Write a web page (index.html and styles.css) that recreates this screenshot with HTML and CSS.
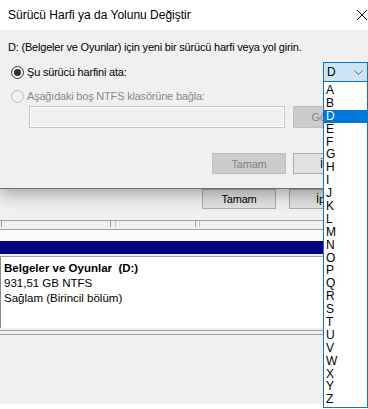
FILE: index.html
```html
<!DOCTYPE html>
<html lang="tr">
<head>
    <meta charset="UTF-8">
    <title>Sürücü Harfi ya da Yolunu Değiştir</title>
    <link rel="stylesheet" href="styles.css">
</head>
<body>
    <div class="screen">
        <div class="dialog">
            <div class="titlebar">
                <span class="title">Sürücü Harfi ya da Yolunu Değiştir</span>
                <svg class="close" width="10" height="10" viewBox="0 0 10 10"><path d="M0 0L10 10M10 0L0 10" stroke="#000" stroke-width="1"/></svg>
            </div>
            <div class="dialog-body">
                <p class="prompt">D: (Belgeler ve Oyunlar) için yeni bir sürücü harfi veya yol girin.</p>
                <div class="row row-letter">
                    <label class="radio"><span class="radio-dot checked"></span>Şu sürücü harfini ata:</label>
                    <div class="combo">
                        <span>D</span>
                        <svg class="chevron" width="9" height="5" viewBox="0 0 9 5"><path d="M0.5 0.5L4.5 4.5L8.5 0.5" fill="none" stroke="#606060"/></svg>
                    </div>
                </div>
                <div class="row row-folder">
                    <label class="radio disabled"><span class="radio-dot"></span>Aşağıdaki boş NTFS klasörüne bağla:</label>
                </div>
                <div class="row row-path">
                    <div class="path-input"></div>
                    <button class="btn" disabled>Gözat...</button>
                </div>
                <div class="row row-actions">
                    <button class="btn" disabled>Tamam</button>
                    <button class="btn">İptal</button>
                </div>
            </div>
        </div>

        <div class="backdrop">
            <div class="bg-buttons">
                <button class="btn">Tamam</button>
                <button class="btn">İptal</button>
            </div>
            <div class="gap"></div>
            <div class="cols">
                <span class="col c1"></span>
                <span class="col c2"></span>
                <span class="col c3"></span>
                <span class="col c4"></span>
                <span class="col c5"></span>
            </div>
            <div class="strip"></div>
            <div class="navy"></div>
            <div class="volume">
                <div class="vol-name">Belgeler ve Oyunlar  (D:)</div>
                <div>931,51 GB NTFS</div>
                <div>Sağlam (Birincil bölüm)</div>
            </div>
            <div class="rule"></div>
            <div class="pane"></div>
            <div class="legend">Ayrılmamış   Birincil bölüm</div>
        </div>

        <ul class="letter-list">
            <li>A</li>
            <li>B</li>
            <li class="selected">D</li>
            <li>E</li>
            <li>F</li>
            <li>G</li>
            <li>H</li>
            <li>I</li>
            <li>J</li>
            <li>K</li>
            <li>L</li>
            <li>M</li>
            <li>N</li>
            <li>O</li>
            <li>P</li>
            <li>Q</li>
            <li>R</li>
            <li>S</li>
            <li>T</li>
            <li>U</li>
            <li>V</li>
            <li>W</li>
            <li>X</li>
            <li>Y</li>
            <li>Z</li>
        </ul>
    </div>
</body>
</html>
```

FILE: styles.css
```css
body {
    margin: 0;
    background-color: #f0f0f0;
    font-family: 'Liberation Sans', Arial, sans-serif;
    font-size: 11px;
    letter-spacing: -0.2px;
    color: #000;
}
.screen {
    position: relative;
    width: 368px;
    height: 409px;
    overflow: hidden;
}
.dialog {
    position: relative;
    z-index: 1;
    box-sizing: border-box;
    height: 189px;
    background-color: #f0f0f0;
    border-bottom: 1px solid #707070;
    box-shadow: 0 5px 16px rgba(0, 0, 0, 0.32);
    overflow: hidden;
}
.titlebar {
    display: flex;
    align-items: center;
    height: 30px;
    padding-left: 8px;
    background-color: #fff;
}
.title {
    font-size: 12px;
    letter-spacing: 0;
}
.close {
    margin-left: auto;
    margin-right: 1px;
}
.dialog-body {
    padding: 10px 1px 0 8px;
}
.prompt {
    margin: 0;
    line-height: 14px;
}
.row {
    display: flex;
    align-items: center;
}
.row-letter {
    height: 20px;
    margin-top: 8px;
    margin-right: -1px;
}
.radio {
    display: flex;
    align-items: center;
    margin-left: 3px;
}
.radio-dot {
    box-sizing: border-box;
    width: 13px;
    height: 13px;
    margin-right: 3px;
    border: 1px solid #333;
    border-radius: 50%;
    display: flex;
    align-items: center;
    justify-content: center;
}
.radio-dot.checked::after {
    content: '';
    width: 7px;
    height: 7px;
    border-radius: 50%;
    background-color: #333;
}
.radio.disabled {
    color: #888;
}
.radio.disabled .radio-dot {
    border-color: #bcbcbc;
}
.combo {
    box-sizing: border-box;
    display: flex;
    align-items: center;
    width: 45px;
    height: 20px;
    margin-left: auto;
    padding-left: 3px;
    padding-right: 4px;
    border: 1px solid #0078d7;
    background-color: #cce4f7;
    font-size: 12px;
    letter-spacing: 0;
}
.chevron {
    margin-left: auto;
}
.row-folder {
    height: 14px;
    margin-top: 7px;
}
.row-path {
    height: 22px;
    margin-top: 3px;
    padding-left: 21px;
}
.path-input {
    box-sizing: border-box;
    width: 257px;
    height: 22px;
    border: 1px solid #c6c6c6;
    box-shadow: inset 0 0 0 1px #fff;
}
.btn {
    box-sizing: border-box;
    flex: none;
    width: 74px;
    height: 21px;
    padding: 0;
    border: 1px solid #adadad;
    background-color: #e1e1e1;
    font-family: inherit;
    font-size: 11px;
    letter-spacing: -0.2px;
    color: #000;
    white-space: nowrap;
    overflow: hidden;
}
.btn:disabled {
    border-color: #bfbfbf;
    background-color: #cccccc;
    color: #838383;
}
.row-path .btn {
    height: 22px;
    margin-left: 8px;
}
.row-actions {
    justify-content: flex-end;
    gap: 7px;
    margin-top: 25px;
}
.backdrop {
    display: flex;
    flex-direction: column;
}
.bg-buttons {
    display: flex;
    gap: 13px;
    height: 20px;
    padding-left: 202px;
}
.bg-buttons .btn {
    height: 20px;
}
.gap {
    height: 11px;
}
.cols {
    display: flex;
    height: 8px;
    border-top: 1px solid #a0a0a0;
    border-bottom: 1px solid #a0a0a0;
}
.col {
    height: 6px;
    border-right: 1px solid #a0a0a0;
}
.c1 { width: 1px; }
.c2 { width: 108px; }
.c3 { width: 4px; border-right-color: #c8c8c8; }
.c4 { width: 79px; }
.c5 { width: 3px; border-right-color: #c8c8c8; }
.strip {
    height: 11px;
    background-color: #fafafa;
}
.navy {
    height: 13px;
    background-color: #000080;
}
.volume {
    box-sizing: border-box;
    height: 72px;
    margin-top: 2px;
    padding: 4px 0 0 3px;
    border-top: 1px solid #a0a0a0;
    border-left: 1px solid #8a8a8a;
    background-color: #fff;
    font-size: 11.5px;
    letter-spacing: 0;
    line-height: 15px;
}
.vol-name {
    font-weight: bold;
    white-space: pre;
}
.rule {
    height: 3px;
    margin-top: 2px;
    border-top: 1px solid #a0a0a0;
    border-bottom: 1px solid #a0a0a0;
}
.pane {
    height: 69px;
}
.legend {
    height: 20px;
    padding: 3px 0 0 1px;
    background-color: #fff;
    line-height: 13px;
    white-space: pre;
}
.letter-list {
    position: absolute;
    top: 81px;
    left: 323px;
    z-index: 2;
    box-sizing: border-box;
    width: 45px;
    margin: 0;
    padding: 2px 0 1px;
    list-style: none;
    border: 1px solid #0078d7;
    background-color: #fff;
    font-size: 12px;
    letter-spacing: 0;
}
.letter-list li {
    height: 12.9px;
    line-height: 12.9px;
    padding-left: 2px;
}
.letter-list .selected {
    background-color: #0078d7;
    color: #fff;
}
```
